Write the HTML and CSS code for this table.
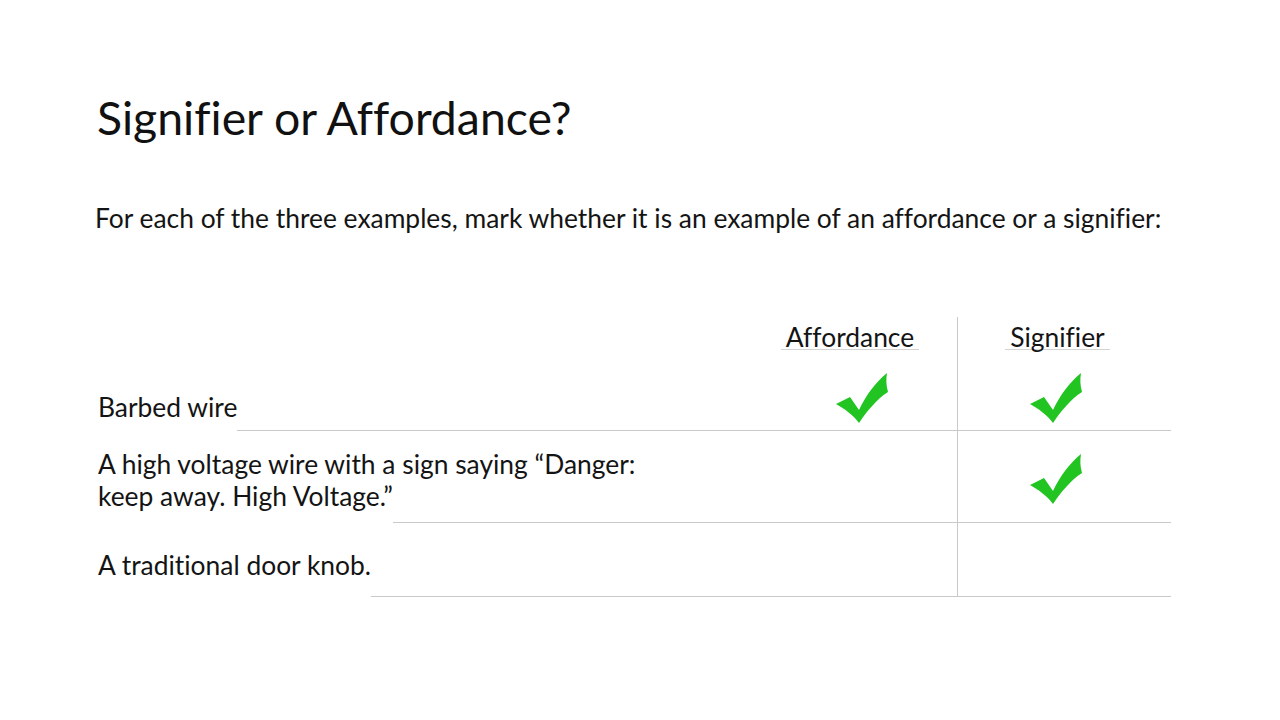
FILE: index.html
```html
<!DOCTYPE html>
<html lang="en">
<head>
<meta charset="utf-8">
<title>Signifier or Affordance?</title>
<link rel="stylesheet" href="styles.css">
</head>
<body>
<main class="slide">
  <h1 class="title">Signifier or Affordance?</h1>
  <p class="intro">For each of the three examples, mark whether it is an example of an affordance or a signifier:</p>

  <section class="table">
    <div class="head-row">
      <div class="col col-aff head-cell"><span class="head-label">Affordance</span></div>
      <div class="col col-sig head-cell"><span class="head-label">Signifier</span></div>
    </div>

    <div class="row row-1">
      <div class="label">Barbed wire</div>
      <div class="cells cells-1">
        <div class="col col-aff">
          <svg class="check" viewBox="0 0 52 50" width="52" height="50"><path d="M0 31 L14 24 L23 37 C30 22 40 9 51 0 C50 6 50 12 52 19 C41 26 31 38 23 50 C17 42 9 36 0 31 Z"/></svg>
        </div>
        <div class="col col-sig">
          <svg class="check" viewBox="0 0 52 50" width="52" height="50"><path d="M0 31 L14 24 L23 37 C30 22 40 9 51 0 C50 6 50 12 52 19 C41 26 31 38 23 50 C17 42 9 36 0 31 Z"/></svg>
        </div>
      </div>
    </div>

    <div class="row row-2">
      <div class="label"><span class="overhang">A high voltage wire with a sign saying “Danger:</span>keep away. High Voltage.”</div>
      <div class="cells cells-2">
        <div class="col col-aff"></div>
        <div class="col col-sig">
          <svg class="check" viewBox="0 0 52 50" width="52" height="50"><path d="M0 31 L14 24 L23 37 C30 22 40 9 51 0 C50 6 50 12 52 19 C41 26 31 38 23 50 C17 42 9 36 0 31 Z"/></svg>
        </div>
      </div>
    </div>

    <div class="row row-3">
      <div class="label">A traditional door knob.</div>
      <div class="cells cells-3">
        <div class="col col-aff"></div>
        <div class="col col-sig"></div>
      </div>
    </div>
  </section>
</main>
</body>
</html>
```

FILE: styles.css
```css
html, body {
  margin: 0;
  padding: 0;
  background: #ffffff;
}

body {
  width: 1280px;
  height: 720px;
  overflow: hidden;
  font-family: "Lato", "Noto Sans", "Liberation Sans", sans-serif;
  font-variant-ligatures: none;
  color: #141414;
}

.slide {
  padding: 89px 0 0 97px;
  width: 1074px;
}

.title {
  margin: 0;
  font-size: 46.4px;
  line-height: 56px;
  font-weight: 400;
  color: #111;
}

.intro {
  margin: 58px 0 0 -2px;
  font-size: 26.4px;
  line-height: 31px;
}

.table {
  margin-top: 83px;
  font-size: 26.4px;
}

.head-row {
  display: flex;
  justify-content: flex-end;
}

.col {
  width: 214px;
  box-sizing: border-box;
  display: flex;
}

.col-sig {
  border-left: 1px solid #c9c9c9;
}

.head-cell {
  padding: 8px 0 8px;
  justify-content: center;
}

.head-cell.col-sig {
  padding-right: 14px;
}

.head-label {
  display: block;
  padding: 0 5px;
  line-height: 24px;
  border-bottom: 1px solid #d4d4d4;
}

.row {
  display: flex;
  align-items: flex-end;
}

.label {
  padding-left: 1px;
  line-height: 31px;
  white-space: nowrap;
}

.overhang {
  display: block;
  width: 0;
  white-space: nowrap;
}

.row-1 .label { padding-bottom: 8px; }
.row-2 .label { padding-bottom: 11px; line-height: 32px; }
.row-3 .label { padding-bottom: 16px; }

.cells {
  flex: 1;
  display: flex;
  justify-content: flex-end;
  align-self: stretch;
  border-bottom: 1px solid #c9c9c9;
}

.cells-1 .col { padding-top: 15px; height: 72px; }
.cells-2 .col { padding-top: 23px; height: 91px; }
.cells-3 .col { height: 73px; }

.col-aff .check { margin-left: 93px; }
.col-sig .check { margin-left: 72px; }

.check {
  display: block;
  fill: #21c421;
}
```
